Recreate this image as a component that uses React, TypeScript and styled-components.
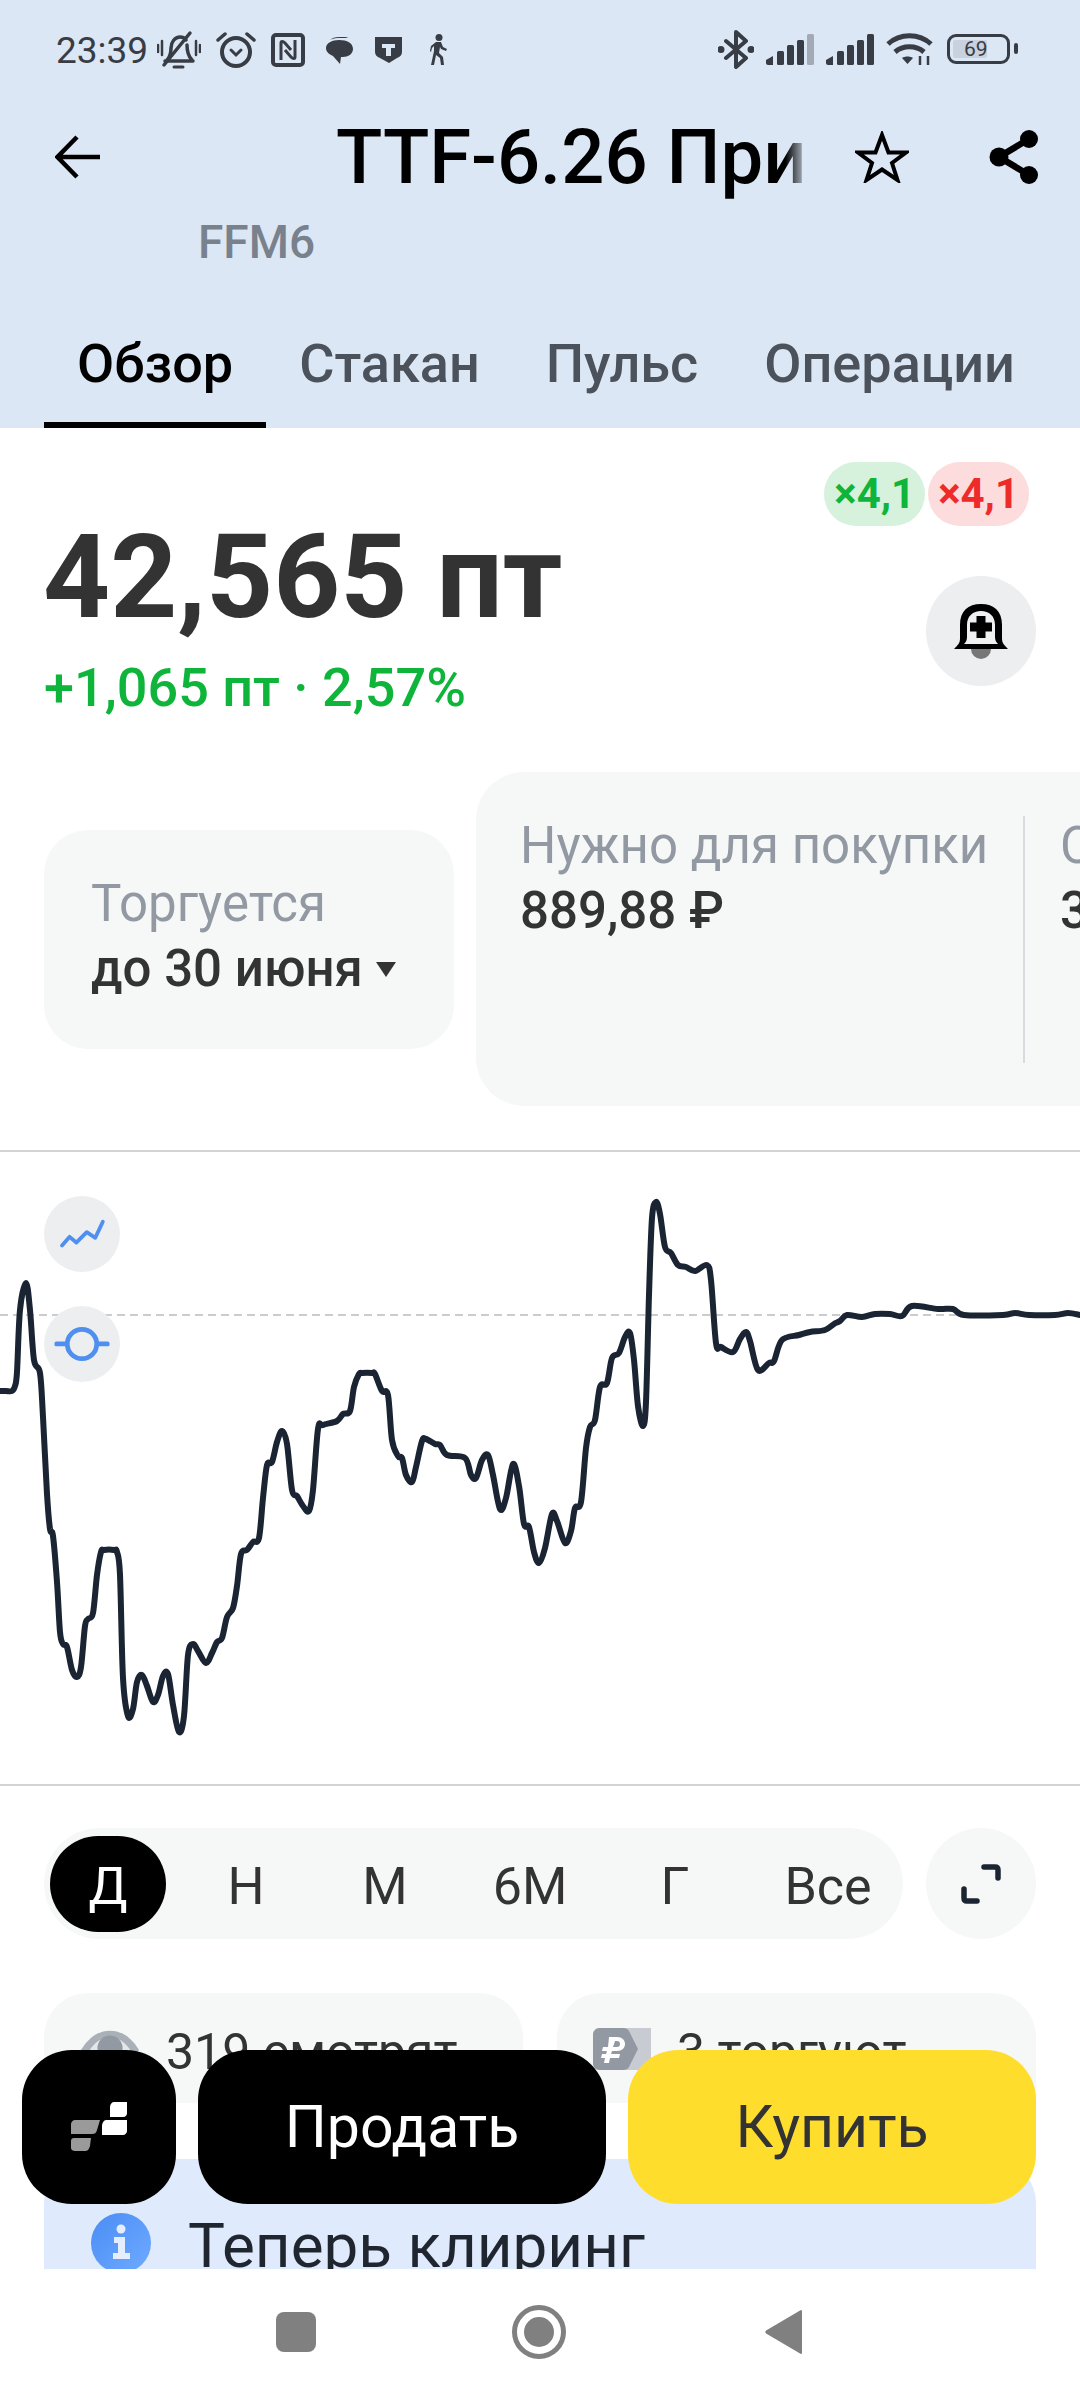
import styled, { createGlobalStyle } from "styled-components";

const GlobalStyle = createGlobalStyle`
  html, body {
    margin: 0;
    padding: 0;
    background: #fff;
    font-family: Roboto, "Noto Sans", sans-serif;
  }
`;

// chart points taken from the picture, x and y in page pixels
const points: [number, number][] = [
  [0, 1391], [6, 1391], [12, 1391], [15, 1386], [17, 1372], [20, 1310], [26, 1283], [30, 1310], [34, 1360], [40, 1373],
  [43, 1417], [47, 1494], [50, 1529], [53, 1536], [57, 1582], [60, 1632], [63, 1644], [67, 1647],
  [72, 1670], [77, 1677], [81, 1667], [85, 1626], [88, 1619], [93, 1613], [97, 1575], [101, 1552],
  [104, 1550], [114, 1550], [117, 1552], [120, 1575], [123, 1678], [128, 1716], [133, 1709],
  [137, 1682], [142, 1675], [147, 1686], [153, 1702], [158, 1695], [163, 1676], [168, 1674],
  [173, 1705], [179, 1732], [184, 1716], [188, 1655], [193, 1644], [198, 1651], [206, 1663],
  [212, 1653], [217, 1642], [222, 1638], [227, 1617], [233, 1608], [237, 1586], [241, 1554],
  [247, 1550], [253, 1542], [259, 1538], [263, 1498], [267, 1465], [272, 1462], [277, 1442],
  [282, 1431], [287, 1444], [292, 1490], [297, 1496], [303, 1506], [309, 1511], [313, 1490],
  [318, 1429], [323, 1425], [337, 1421], [343, 1414], [350, 1411], [354, 1387], [359, 1374],
  [362, 1373], [372, 1373], [375, 1374], [382, 1391], [388, 1395], [392, 1440], [398, 1456],
  [402, 1458], [406, 1475], [412, 1482], [416, 1467], [422, 1441], [426, 1439], [435, 1444],
  [440, 1445], [447, 1455], [465, 1458], [471, 1475], [476, 1478], [482, 1460], [488, 1455],
  [493, 1475], [500, 1509], [506, 1498], [513, 1464], [519, 1486], [524, 1524], [529, 1527],
  [534, 1552], [539, 1563], [545, 1548], [552, 1514], [557, 1521], [565, 1543], [571, 1531],
  [575, 1508], [581, 1502], [586, 1448], [590, 1427], [595, 1420], [600, 1387], [607, 1383],
  [612, 1358], [619, 1353], [625, 1337], [630, 1333], [634, 1360], [638, 1406], [643, 1426],
  [646, 1402], [649, 1295], [652, 1218], [656, 1202], [660, 1214], [665, 1247], [671, 1253],
  [678, 1265], [686, 1267], [695, 1271], [707, 1265], [711, 1280], [716, 1343], [721, 1347],
  [733, 1352], [740, 1339], [746, 1332], [750, 1341], [758, 1370], [769, 1363], [774, 1361],
  [782, 1340], [799, 1335], [810, 1332], [825, 1330], [834, 1324], [840, 1321], [847, 1315],
  [862, 1317], [875, 1314], [890, 1314], [902, 1316], [912, 1306], [938, 1309], [953, 1309],
  [964, 1315], [1003, 1315], [1015, 1313], [1029, 1315], [1055, 1315], [1068, 1313], [1080, 1315],
];

const smoothPath = (pts: [number, number][]) => {
  let d = `M${pts[0][0]} ${pts[0][1]}`;
  for (let i = 0; i < pts.length - 1; i++) {
    const p0 = pts[Math.max(i - 1, 0)];
    const p1 = pts[i];
    const p2 = pts[i + 1];
    const p3 = pts[Math.min(i + 2, pts.length - 1)];
    const c1x = p1[0] + (p2[0] - p0[0]) / 6;
    const c1y = p1[1] + (p2[1] - p0[1]) / 6;
    const c2x = p2[0] - (p3[0] - p1[0]) / 6;
    const c2y = p2[1] - (p3[1] - p1[1]) / 6;
    d += ` C${c1x} ${c1y} ${c2x} ${c2y} ${p2[0]} ${p2[1]}`;
  }
  return d;
};

const ranges = [
  { label: "Д", gap: 0, active: true },
  { label: "Н", gap: 22 },
  { label: "М", gap: 23 },
  { label: "6М", gap: 29 },
  { label: "Г", gap: 29 },
  { label: "Все", gap: 37 },
];

const tabs = ["Обзор", "Стакан", "Пульс", "Операции"];

export default function App() {
  return (
    <Page>
      <GlobalStyle />
      <Content>
        <Header>
          <StatusBar>
            <Clock>23:39</Clock>
            <StatusLeft>
              <StatusSlot $gap={0}>
                <svg width="44" height="40" viewBox="0 0 44 40" fill="none" stroke="#383c44" strokeLinecap="round">
                  <path d="M10 30c3-3 4-6 4-12 0-6 4-11 9-11 3 0 5 1 6 3M30 15c0 7 1 11 5 15M8 31h28" strokeWidth="3.5" />
                  <path d="M7 35 33 3" strokeWidth="3.5" />
                  <path d="M17 37h9" strokeWidth="3" />
                  <path d="M1 15v7M5 11v14M39 11v14M43 15v7" strokeWidth="2.5" />
                </svg>
              </StatusSlot>
              <StatusSlot $gap={15}>
                <AlarmIcon />
              </StatusSlot>
              <StatusSlot $gap={15}>
                <svg width="34" height="34" viewBox="0 0 34 34" fill="none" stroke="#383c44">
                  <rect x="2" y="2" width="30" height="30" rx="3" strokeWidth="4" />
                  <path d="M10 27V10c0-2 2-2 4 0l6 7M24 7v17c0 2-2 2-4 0l-6-7" strokeWidth="3" />
                </svg>
              </StatusSlot>
              <StatusSlot $gap={20}>
                <svg width="29" height="29" viewBox="0 0 29 29" fill="#383c44">
                  <path d="M5 4c2-2 5-3 9-3h6c2 0 3 1 3 1H13C9 2 7 3 5 4Z" />
                  <path d="M14 4c8 0 14 3 14 9 0 5-5 8-10 8-1 0-2 0-2 0l-1 7-7-8C4 18 1 16 1 12c0-5 6-8 13-8Z" />
                </svg>
              </StatusSlot>
              <StatusSlot $gap={21}>
                <svg width="27" height="26" viewBox="0 0 27 26" fill="#383c44">
                  <path d="M0 0h27v15c0 3-2 5-5 6l-8 5-9-5c-3-1-5-3-5-6Z" />
                  <path d="M7 7h13v4h-4v8h-5v-8H7Z" fill="#dce7f5" />
                </svg>
              </StatusSlot>
              <StatusSlot $gap={28}>
                <svg width="18" height="32" viewBox="0 0 18 32" fill="#383c44">
                  <circle cx="9" cy="3.5" r="3.5" />
                  <path d="M6 8h5l2 5 4 2-1 2-5-2-1-2-1 6 4 4 1 8h-3l-1-7-4-3-2 10H1l3-14V12l-2 2-1 4-1-1 1-5Z" />
                </svg>
              </StatusSlot>
            </StatusLeft>
            <StatusRight>
              <svg width="36" height="39" viewBox="0 0 36 39" fill="none" stroke="#383c44" strokeWidth="4" strokeLinecap="round" strokeLinejoin="round">
                <path d="M8 11 28 28 18 37V2l10 9L8 28" />
                <circle cx="3" cy="19.5" r="1.5" fill="#383c44" />
                <circle cx="33" cy="19.5" r="1.5" fill="#383c44" />
              </svg>
              <SignalIcon $weak />
              <SignalIcon />
              <svg width="47" height="34" viewBox="0 0 47 34" fill="none" stroke="#383c44" strokeWidth="5">
                <path d="M2 12c12-11 31-11 43 0" />
                <path d="M9 20c8-7 21-7 29 0" />
                <path d="M16 26c3-2 8-2 11 0l-5.500 6Z" fill="#383c44" strokeWidth="0" />
                <path d="M34 24v9M42 24v9" strokeWidth="2.5" />
              </svg>
              <Battery>
                <BatteryFill />
                <BatteryText>69</BatteryText>
                <BatteryNub />
              </Battery>
            </StatusRight>
          </StatusBar>

          <Toolbar>
            <svg width="46" height="44" viewBox="0 0 46 44" fill="none" stroke="#000" strokeWidth="4.5">
              <path d="M45 22H3M22 2 2.500 22 22 42" />
            </svg>
            <Title>TTF-6.26 При</Title>
            <StarSlot>
              <svg width="54" height="52" viewBox="0 0 54 52" fill="none" stroke="#000" strokeWidth="4" strokeLinejoin="miter">
                <path d="M27 4l6.500 17.500H51L37 32l5.500 17L27 38.500 11.500 49 17 32 3 21.500h17.500Z" />
              </svg>
            </StarSlot>
            <ShareSlot>
              <svg width="52" height="56" viewBox="0 0 52 56" fill="#000" stroke="#000">
                <path d="M41 10 11 28l30 18" fill="none" strokeWidth="6.500" />
                <circle cx="41" cy="10" r="9" strokeWidth="0" />
                <circle cx="11" cy="28" r="9.500" strokeWidth="0" />
                <circle cx="41" cy="46" r="9" strokeWidth="0" />
              </svg>
            </ShareSlot>
          </Toolbar>

          <Ticker>FFM6</Ticker>

          <Tabs>
            {tabs.map((tab, i) => (
              <Tab key={tab} $active={i === 0}>
                {tab}
              </Tab>
            ))}
          </Tabs>
        </Header>

        <Hero>
          <PriceColumn>
            <Price>42,565 пт</Price>
            <Change>+1,065 пт · 2,57%</Change>
          </PriceColumn>
          <HeroSide>
            <Badges>
              <Badge $tone="green">×4,1</Badge>
              <Badge $tone="red">×4,1</Badge>
            </Badges>
            <RoundButton>
              <svg width="54" height="56" viewBox="0 0 54 56">
                <path d="M6 36V22C6 8 14 1 27 1s21 7 21 21v14c0 4 2 6 6 10H0c4-4 6-6 6-10Z" fill="#000" />
                <path d="M13 22c0-9 6-14 14-14s14 5 14 14v12c0 3 1 5 3 7H10c2-2 3-4 3-7Z" fill="#eef0f1" />
                <path d="M22.500 13h9v6.500H38v9h-6.500V35h-9v-6.500H16v-9h6.500Z" fill="#000" />
                <path d="M17 46h20a10 10 0 0 1-20 0Z" fill="#777" />
              </svg>
            </RoundButton>
          </HeroSide>
        </Hero>

        <CardsRow>
          <ExpiryCard>
            <MutedLabel>Торгуется</MutedLabel>
            <ExpiryValue>
              до 30 июня
              <Caret />
            </ExpiryValue>
          </ExpiryCard>
          <InfoCard>
            <InfoColumn>
              <MutedLabel>Нужно для покупки</MutedLabel>
              <InfoValue>889,88 ₽</InfoValue>
            </InfoColumn>
            <InfoColumn $divided>
              <MutedLabel>С</MutedLabel>
              <InfoValue>3</InfoValue>
            </InfoColumn>
          </InfoCard>
        </CardsRow>

        <ChartSection>
          <ChartButtons>
            <ChartButton>
              <svg width="48" height="32" viewBox="0 0 48 32" fill="none" stroke="#4f8ff0" strokeWidth="4" strokeLinecap="round" strokeLinejoin="round">
                <path d="M3 28l8-9 7 6 11-11 9 6L46 3" />
              </svg>
            </ChartButton>
            <ChartButton>
              <svg width="58" height="38" viewBox="0 0 58 38" fill="none" stroke="#4f8ff0" strokeWidth="5" strokeLinecap="round">
                <circle cx="29" cy="19" r="15.500" />
                <path d="M2 19h11M45 19h11" />
              </svg>
            </ChartButton>
          </ChartButtons>
          <ChartSvg viewBox="0 1152 1080 632" width="1080" height="632">
            <path d="M0 1315H1080" stroke="#cccccc" strokeWidth="2" strokeDasharray="8 5" fill="none" />
            <path d={smoothPath(points)} stroke="#1a2433" strokeWidth="6" fill="none" strokeLinejoin="round" strokeLinecap="round" />
          </ChartSvg>
        </ChartSection>

        <RangeRow>
          <RangeBar>
            {ranges.map((r) => (
              <RangeItem key={r.label} $active={r.active} $gap={r.gap}>
                {r.label}
              </RangeItem>
            ))}
          </RangeBar>
          <ExpandButton>
            <svg width="40" height="40" viewBox="0 0 40 40" fill="none" stroke="#1a2433" strokeWidth="5.500" strokeLinecap="round" strokeLinejoin="round">
              <path d="M23 3h11c2 0 3 1 3 3v8" />
              <path d="M3 25v9c0 2 1 3 3 3h10" />
            </svg>
          </ExpandButton>
        </RangeRow>

        <StatsRow>
          <StatCard>
            <svg width="60" height="44" viewBox="0 0 62 44">
              <path d="M1 22C9 9 19 2 31 2s22 7 30 20C53 35 43 42 31 42S9 35 1 22Z" fill="#aab0b8" />
              <path d="M10 22C16 13 23 9 31 9s15 4 21 13c-6 9-13 13-21 13s-15-4-21-13Z" fill="#e4e7ea" />
              <circle cx="31" cy="20" r="13" fill="#9299a2" />
            </svg>
            <StatText>319 смотрят</StatText>
          </StatCard>
          <StatCard>
            <svg width="58" height="42" viewBox="0 0 58 42">
              <rect x="20" y="0" width="38" height="42" fill="#c8ccd2" />
              <path d="M6 0h24c3 0 5 1 6 3l9 18-9 18c-1 2-3 3-6 3H6c-3 0-6-3-6-6V6c0-3 3-6 6-6Z" fill="#9299a2" />
              <path d="M16 9h8c5 0 8 3 8 7s-3 7-8 7h-5l-1 3h9l-1 4h-9l-1 5h-5l1-5H8l1-4h4l1-3H9l1-4h5Zm6 4-2 6h4c2 0 3-1 3-3s-1-3-3-3Z" fill="#fff" />
            </svg>
            <StatText>3 торгуют</StatText>
          </StatCard>
        </StatsRow>

        <NoticeBanner>
          <svg width="60" height="60" viewBox="0 0 60 60">
            <defs>
              <linearGradient id="infoFill" x1="0" y1="0" x2="1" y2="1">
                <stop offset="0" stopColor="#4a8df5" />
                <stop offset="1" stopColor="#6faaff" />
              </linearGradient>
            </defs>
            <circle cx="30" cy="30" r="30" fill="url(#infoFill)" />
            <circle cx="30" cy="16" r="4.500" fill="#e4eeff" />
            <path d="M23 24h11v16h5v6H22v-6h5V30h-4Z" fill="#e4eeff" />
          </svg>
          <NoticeText>Теперь клиринг</NoticeText>
        </NoticeBanner>
      </Content>

      <ActionBar>
        <LogoButton>
          <svg width="56" height="50" viewBox="0 0 56 50">
            <path d="M4 18h25l-3 10c-1 3-2 4-5 4H0v-10c0-2 2-4 4-4Z" fill="#9a9a9a" />
            <path d="M3 36h17l-1 8c-1 3-2 5-5 5H4c-2 0-4-1-4-3v-7c0-2 1-3 3-3Z" fill="#9a9a9a" />
            <path d="M35 18h21v11c0 2-2 4-4 4H31v-9c0-3 2-6 4-6Z" fill="#fff" />
            <path d="M43 0h13v11c0 2-1 4-4 4H39V5c0-3 2-5 4-5Z" fill="#fff" />
          </svg>
        </LogoButton>
        <TradeButton $kind="sell">Продать</TradeButton>
        <TradeButton $kind="buy">Купить</TradeButton>
      </ActionBar>

      <NavBar>
        <NavSquare />
        <NavCircle>
          <NavDot />
        </NavCircle>
        <svg width="38" height="46" viewBox="0 0 38 46">
          <path d="M36 2v42L2 24c-1-1-1-1 0-2Z" fill="#808080" stroke="#808080" strokeWidth="2" strokeLinejoin="round" />
        </svg>
      </NavBar>
    </Page>
  );
}

const Page = styled.div`
  position: relative;
  width: 1080px;
  height: 2400px;
  overflow: hidden;
  background: #fff;
  color: #333;
`;

const Content = styled.main`
  height: 2269px;
  overflow: hidden;
`;

const Header = styled.header`
  height: 428px;
  background: #dce7f5;
  display: flex;
  flex-direction: column;
`;

const StatusBar = styled.div`
  height: 100px;
  padding-left: 56px;
  display: flex;
  align-items: center;
  color: #383c44;
`;

const Clock = styled.span`
  font-size: 37px;
  width: 101px;
  flex-shrink: 0;
`;

const StatusLeft = styled.div`
  display: flex;
  align-items: center;
`;

const StatusSlot = styled.div<{ $gap: number }>`
  margin-left: ${(p) => p.$gap}px;
  display: flex;
`;

const StatusRight = styled.div`
  position: absolute;
  left: 718px;
  top: 29px;
  height: 40px;
  display: flex;
  align-items: center;
  gap: 12px;
`;

const AlarmIcon = () => (
  <svg width="40" height="36" viewBox="0 0 40 36" fill="none" stroke="#383c44" strokeLinecap="round">
    <circle cx="20" cy="20" r="14" strokeWidth="4" />
    <path d="M15 18l5 5 5-5" strokeWidth="3" />
    <path d="M2 8l7-6M38 8l-7-6" strokeWidth="3.500" />
  </svg>
);

const SignalIcon = ({ $weak }: { $weak?: boolean }) => (
  <svg width="48" height="31" viewBox="0 0 48 31" fill="#383c44">
    <path d="M0 26l7-4v9H2c-1 0-2-1-2-2Z" />
    <rect x="11" y="17" width="7" height="14" rx="1.500" />
    <rect x="21" y="11" width="7" height="20" rx="1.500" />
    <rect x="31" y="6" width="7" height="25" rx="1.500" />
    <rect x="41" y="0" width="7" height="31" rx="1.500" fill={$weak ? "#a3aab5" : "#383c44"} />
  </svg>
);

const Battery = styled.div`
  position: relative;
  width: 63px;
  height: 30px;
  margin-left: 2px;
  box-sizing: border-box;
  border: 3.5px solid #383c44;
  border-radius: 9px;
  display: flex;
  align-items: center;
`;

const BatteryFill = styled.div`
  position: absolute;
  left: 3px;
  top: 3px;
  bottom: 3px;
  width: 34px;
  background: #c8d1de;
  border-radius: 2px;
`;

const BatteryText = styled.span`
  position: relative;
  margin-left: 14px;
  font-size: 21px;
  line-height: 23px;
  color: #383c44;
`;

const BatteryNub = styled.div`
  position: absolute;
  right: -11px;
  top: 6px;
  width: 4px;
  height: 11px;
  background: #383c44;
  border-radius: 2px;
`;

const Toolbar = styled.div`
  position: relative;
  margin-top: 12px;
  height: 90px;
  padding-left: 55px;
  display: flex;
  align-items: center;
`;

const Title = styled.h1`
  margin: 0 0 0 235px;
  width: 473px;
  flex-shrink: 0;
  font-size: 76px;
  line-height: 90px;
  font-weight: 500;
  color: #000;
  white-space: nowrap;
  overflow: hidden;
  mask-image: linear-gradient(to right, #000 95%, transparent 100%);
`;

const StarSlot = styled.div`
  margin-left: 46px;
  display: flex;
`;

const ShareSlot = styled.div`
  margin-left: 79px;
  display: flex;
`;

const Ticker = styled.div`
  margin: 15px 0 0 198px;
  font-size: 46px;
  line-height: 50px;
  font-weight: 500;
  color: #78818c;
`;

const Tabs = styled.nav`
  margin-top: auto;
  padding-left: 44px;
  display: flex;
`;

const Tab = styled.div<{ $active?: boolean }>`
  padding: 0 33px 28px;
  font-size: 54px;
  line-height: 60px;
  font-weight: 500;
  color: ${(p) => (p.$active ? "#000" : "#4b525c")};
  border-bottom: 6px solid ${(p) => (p.$active ? "#000" : "transparent")};
  white-space: nowrap;
`;

const Hero = styled.section`
  height: 290px;
  padding: 34px 44px 20px;
  box-sizing: content-box;
  display: flex;
  justify-content: space-between;
`;

const PriceColumn = styled.div`
  padding-top: 50px;
`;

const Price = styled.div`
  font-size: 117px;
  line-height: 130px;
  font-weight: 700;
  color: #333;
  margin-left: -1px;
`;

const Change = styled.div`
  margin-top: 16px;
  font-size: 54px;
  line-height: 60px;
  font-weight: 500;
  color: #0fb53a;
`;

const HeroSide = styled.div`
  display: flex;
  flex-direction: column;
  align-items: flex-end;
  gap: 50px;
`;

const Badges = styled.div`
  margin-right: 7px;
  display: flex;
  gap: 3px;
`;

const Badge = styled.div<{ $tone: "green" | "red" }>`
  height: 64px;
  padding: 0 10px;
  border-radius: 32px;
  font-size: 42px;
  line-height: 64px;
  font-weight: 700;
  background: ${(p) => (p.$tone === "green" ? "#d6f1dc" : "#fcdcdc")};
  color: ${(p) => (p.$tone === "green" ? "#0fb53a" : "#ee2a2a")};
`;

const RoundButton = styled.div`
  width: 110px;
  height: 110px;
  border-radius: 50%;
  background: #eceeef;
  display: flex;
  align-items: center;
  justify-content: center;
`;

const CardsRow = styled.section`
  height: 334px;
  padding-left: 44px;
  display: flex;
  align-items: center;
  gap: 22px;
  overflow: hidden;
`;

const ExpiryCard = styled.div`
  flex-shrink: 0;
  box-sizing: border-box;
  width: 410px;
  height: 219px;
  padding: 44px 0 0 47px;
  border-radius: 44px;
  background: #f6f8f8;
`;

const MutedLabel = styled.div`
  font-size: 51px;
  line-height: 59px;
  color: #9299a2;
  white-space: nowrap;
`;

const ExpiryValue = styled.div`
  margin-top: 6px;
  font-size: 51px;
  line-height: 59px;
  font-weight: 500;
  color: #333;
  display: flex;
  align-items: center;
  white-space: nowrap;
`;

const Caret = styled.span`
  margin: 2px 0 0 13px;
  width: 0;
  height: 0;
  border-left: 10px solid transparent;
  border-right: 10px solid transparent;
  border-top: 15px solid #333;
`;

const InfoCard = styled.div`
  flex-shrink: 0;
  box-sizing: border-box;
  width: 900px;
  height: 334px;
  padding: 44px 0 43px 44px;
  border-radius: 48px;
  background: #f6f8f8;
  display: flex;
`;

const InfoColumn = styled.div<{ $divided?: boolean }>`
  box-sizing: border-box;
  width: ${(p) => (p.$divided ? "300px" : "503px")};
  padding-left: ${(p) => (p.$divided ? "35px" : "0")};
  border-left: ${(p) => (p.$divided ? "2px solid #d9dcdf" : "none")};
`;

const InfoValue = styled.div`
  margin-top: 6px;
  font-size: 51px;
  line-height: 59px;
  font-weight: 500;
  color: #333;
`;

const ChartSection = styled.section`
  position: relative;
  margin-top: 44px;
  border-top: 2px solid #d4d4d4;
  border-bottom: 2px solid #d4d4d4;
`;

const ChartSvg = styled.svg`
  display: block;
`;

const ChartButtons = styled.div`
  position: absolute;
  left: 44px;
  top: 44px;
  display: flex;
  flex-direction: column;
  gap: 34px;
`;

const ChartButton = styled.div`
  width: 76px;
  height: 76px;
  border-radius: 50%;
  background: #eceeef;
  display: flex;
  align-items: center;
  justify-content: center;
  & svg {
    transform: scale(0.95);
  }
`;

const RangeRow = styled.section`
  margin-top: 42px;
  padding: 0 44px;
  display: flex;
  justify-content: space-between;
`;

const RangeBar = styled.div`
  box-sizing: border-box;
  width: 859px;
  height: 111px;
  padding: 0 6px;
  border-radius: 56px;
  background: #f6f8f8;
  display: flex;
  align-items: center;
`;

const RangeItem = styled.div<{ $active?: boolean; $gap: number }>`
  box-sizing: border-box;
  width: 116px;
  height: 96px;
  padding-top: 3px;
  margin-left: ${(p) => p.$gap}px;
  flex-shrink: 0;
  border-radius: 48px;
  background: ${(p) => (p.$active ? "#000" : "transparent")};
  color: ${(p) => (p.$active ? "#fff" : "#333")};
  font-size: 52px;
  line-height: 96px;
  text-align: center;
`;

const ExpandButton = styled.div`
  width: 110px;
  height: 111px;
  border-radius: 50%;
  background: #f6f8f8;
  display: flex;
  align-items: center;
  justify-content: center;
`;

const StatsRow = styled.section`
  margin-top: 54px;
  padding: 0 44px;
  display: grid;
  grid-template-columns: 479px 479px;
  gap: 34px;
`;

const StatCard = styled.div`
  height: 110px;
  box-sizing: border-box;
  padding: 35px 0 0 36px;
  border-radius: 44px 44px 0 0;
  background: #f6f8f8;
  display: flex;
  align-items: flex-start;
  gap: 26px;
`;

const StatText = styled.div`
  margin-top: -6px;
  font-size: 50px;
  line-height: 60px;
  color: #333;
`;

const NoticeBanner = styled.section`
  margin: 56px 44px 0;
  height: 200px;
  padding: 54px 0 0 47px;
  border-radius: 44px 44px 0 0;
  background: #dfeafc;
  display: flex;
  align-items: flex-start;
  gap: 37px;
`;

const NoticeText = styled.div`
  margin-top: -1px;
  font-size: 62px;
  line-height: 68px;
  color: #1f2630;
`;

const ActionBar = styled.div`
  position: absolute;
  left: 22px;
  top: 2050px;
  display: flex;
  gap: 22px;
`;

const LogoButton = styled.div`
  width: 154px;
  height: 154px;
  box-sizing: border-box;
  padding: 52px 0 0 49px;
  border-radius: 50px;
  background: #000;
`;

const TradeButton = styled.div<{ $kind: "sell" | "buy" }>`
  width: 408px;
  height: 154px;
  border-radius: 50px;
  font-size: 59px;
  line-height: 154px;
  text-align: center;
  background: ${(p) => (p.$kind === "sell" ? "#000" : "#ffdd2d")};
  color: ${(p) => (p.$kind === "sell" ? "#fff" : "#333")};
`;

const NavBar = styled.nav`
  height: 131px;
  padding-left: 276px;
  display: flex;
  align-items: center;
  padding-bottom: 6px;
  box-sizing: border-box;
  & > svg {
    margin-left: 199px;
  }
`;

const NavSquare = styled.div`
  width: 40px;
  height: 40px;
  border-radius: 8px;
  background: #808080;
`;

const NavCircle = styled.div`
  width: 54px;
  height: 54px;
  margin-left: 196px;
  box-sizing: border-box;
  border: 5px solid #808080;
  border-radius: 50%;
  display: flex;
  align-items: center;
  justify-content: center;
`;

const NavDot = styled.div`
  width: 30px;
  height: 30px;
  border-radius: 50%;
  background: #808080;
`;
